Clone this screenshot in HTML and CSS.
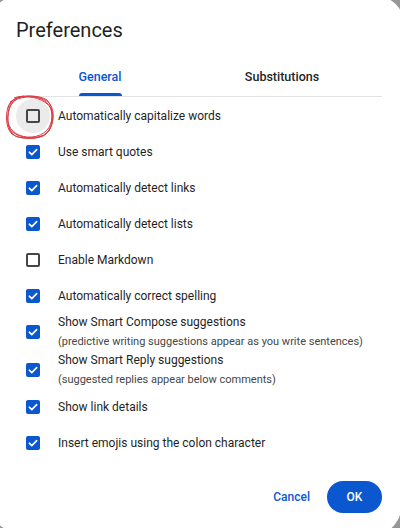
FILE: index.html
```html
<!DOCTYPE html>
<html lang="en">
<head>
<meta charset="utf-8">
<title>Preferences</title>
<link rel="stylesheet" href="styles.css">
</head>
<body>
<div class="dialog">
  <h1 class="title">Preferences</h1>
  <div class="tabs">
    <div class="tab active"><span class="tab-label">General</span></div>
    <div class="tab"><span class="tab-label">Substitutions</span></div>
  </div>
  <ul class="list">
    <li class="row">
      <span class="cb-wrap hover"><span class="cb"></span></span>
      <span class="label">Automatically capitalize words</span>
      <svg class="scribble" width="60" height="48" viewBox="0 0 60 48" fill="none" stroke="#dc3c44" stroke-width="1">
        <path d="M14 4 C26 0 44 2 50 10 C56 19 53 34 46 40 C38 46 20 46 12 40 C5 34 5 16 10 9 C13 5 18 3 24 2"/>
        <path d="M10 8 C18 1 38 0 47 6 C54 12 53 30 49 37 C44 44 28 45 18 43 C10 41 7 31 8 21 C8 14 11 9 17 5"/>
        <path d="M18 3 C30 1 45 5 51 14 C55 23 52 36 43 42 C34 46 19 44 11 37 C6 30 7 15 13 8"/>
        <path d="M8 14 C10 6 22 2 34 3 C44 4 52 11 52 22 C52 34 44 42 32 43 C20 44 10 38 8 28"/>
      </svg>
    </li>
    <li class="row">
      <span class="cb-wrap"><span class="cb checked"><svg viewBox="0 0 14 14" width="14" height="14"><path d="M3.3 7.2 L5.8 9.6 L10.7 4.6" fill="none" stroke="#fff" stroke-width="1.6" stroke-linecap="round" stroke-linejoin="round"/></svg></span></span>
      <span class="label">Use smart quotes</span>
    </li>
    <li class="row">
      <span class="cb-wrap"><span class="cb checked"><svg viewBox="0 0 14 14" width="14" height="14"><path d="M3.3 7.2 L5.8 9.6 L10.7 4.6" fill="none" stroke="#fff" stroke-width="1.6" stroke-linecap="round" stroke-linejoin="round"/></svg></span></span>
      <span class="label">Automatically detect links</span>
    </li>
    <li class="row">
      <span class="cb-wrap"><span class="cb checked"><svg viewBox="0 0 14 14" width="14" height="14"><path d="M3.3 7.2 L5.8 9.6 L10.7 4.6" fill="none" stroke="#fff" stroke-width="1.6" stroke-linecap="round" stroke-linejoin="round"/></svg></span></span>
      <span class="label">Automatically detect lists</span>
    </li>
    <li class="row">
      <span class="cb-wrap"><span class="cb"></span></span>
      <span class="label">Enable Markdown</span>
    </li>
    <li class="row">
      <span class="cb-wrap"><span class="cb checked"><svg viewBox="0 0 14 14" width="14" height="14"><path d="M3.3 7.2 L5.8 9.6 L10.7 4.6" fill="none" stroke="#fff" stroke-width="1.6" stroke-linecap="round" stroke-linejoin="round"/></svg></span></span>
      <span class="label">Automatically correct spelling</span>
    </li>
    <li class="row two">
      <span class="cb-wrap"><span class="cb checked"><svg viewBox="0 0 14 14" width="14" height="14"><path d="M3.3 7.2 L5.8 9.6 L10.7 4.6" fill="none" stroke="#fff" stroke-width="1.6" stroke-linecap="round" stroke-linejoin="round"/></svg></span></span>
      <span class="text">
        <span class="label">Show Smart Compose suggestions</span>
        <span class="sub">(predictive writing suggestions appear as you write sentences)</span>
      </span>
    </li>
    <li class="row two">
      <span class="cb-wrap"><span class="cb checked"><svg viewBox="0 0 14 14" width="14" height="14"><path d="M3.3 7.2 L5.8 9.6 L10.7 4.6" fill="none" stroke="#fff" stroke-width="1.6" stroke-linecap="round" stroke-linejoin="round"/></svg></span></span>
      <span class="text">
        <span class="label">Show Smart Reply suggestions</span>
        <span class="sub">(suggested replies appear below comments)</span>
      </span>
    </li>
    <li class="row">
      <span class="cb-wrap"><span class="cb checked"><svg viewBox="0 0 14 14" width="14" height="14"><path d="M3.3 7.2 L5.8 9.6 L10.7 4.6" fill="none" stroke="#fff" stroke-width="1.6" stroke-linecap="round" stroke-linejoin="round"/></svg></span></span>
      <span class="label">Show link details</span>
    </li>
    <li class="row">
      <span class="cb-wrap"><span class="cb checked"><svg viewBox="0 0 14 14" width="14" height="14"><path d="M3.3 7.2 L5.8 9.6 L10.7 4.6" fill="none" stroke="#fff" stroke-width="1.6" stroke-linecap="round" stroke-linejoin="round"/></svg></span></span>
      <span class="label">Insert emojis using the colon character</span>
    </li>
  </ul>
  <div class="actions">
    <button class="btn text-btn">Cancel</button>
    <button class="btn ok-btn">OK</button>
  </div>
</div>
</body>
</html>
```

FILE: styles.css
```css
* { box-sizing: border-box; }

html, body {
  margin: 0;
  padding: 0;
  height: 100%;
  overflow: hidden;
}

body {
  background: #979797;
  font-family: Roboto, "Liberation Sans", Arial, sans-serif;
  color: #1f1f1f;
}

.dialog {
  width: 414px;
  height: 536px;
  margin: -4px 0 0 -10px;
  background: #ffffff;
  border-radius: 28px 28px 28px 28px;
  border-bottom-right-radius: 22px 40px;
  padding: 22px 22px 0 26px;
  display: flex;
  flex-direction: column;
}

.title {
  margin: 0;
  font-size: 20px;
  line-height: 24px;
  font-weight: 400;
  color: #1f1f1f;
}

.tabs {
  margin-top: 14px;
  display: grid;
  grid-template-columns: 168px 196px;
  border-bottom: 1px solid #e3e3e3;
  width: 366px;
}

.tab {
  height: 40px;
  display: flex;
  justify-content: center;
  font-size: 12.5px;
  font-weight: 500;
  color: #1f1f1f;
}

.tab-label {
  position: relative;
  display: flex;
  align-items: center;
}

.tab.active .tab-label {
  color: #0b57d0;
}

.tab.active .tab-label::after {
  content: "";
  position: absolute;
  left: 0;
  right: 0;
  bottom: 0;
  height: 3px;
  background: #0b57d0;
  border-radius: 3px 3px 0 0;
}

.list {
  list-style: none;
  margin: 1px 0 0 0;
  padding: 0 0 0 10px;
}

.row {
  position: relative;
  height: 36px;
  display: flex;
  align-items: center;
  gap: 18px;
}

.row.two {
  height: 38px;
  margin-top: -1px;
  margin-bottom: 0.5px;
}

.cb-wrap {
  width: 14px;
  height: 14px;
  position: relative;
  flex: none;
}

.cb-wrap.hover::before {
  content: "";
  position: absolute;
  left: -10px;
  top: -10px;
  width: 34px;
  height: 34px;
  border-radius: 50%;
  background: #ebebeb;
}

.cb {
  position: relative;
  display: block;
  width: 14px;
  height: 14px;
  border: 2px solid #444746;
  border-radius: 2px;
}

.cb.checked {
  border: none;
  background: #0b57d0;
}

.cb svg {
  display: block;
}

.label {
  font-size: 12px;
  line-height: 19px;
  color: #1f1f1f;
}

.text {
  display: flex;
  flex-direction: column;
}

.sub {
  font-size: 11px;
  line-height: 19px;
  color: #444746;
}

.scribble {
  position: absolute;
  left: -26px;
  top: -4px;
  width: 60px;
  height: 48px;
  pointer-events: none;
}

.actions {
  margin-top: 20px;
  display: flex;
  justify-content: flex-end;
  gap: 5px;
}

.btn {
  font-family: Roboto, "Liberation Sans", Arial, sans-serif;
  font-size: 12px;
  font-weight: 500;
  height: 32px;
  border: none;
  border-radius: 16px;
  cursor: pointer;
}

.text-btn {
  background: transparent;
  color: #0b57d0;
  padding: 0 12px;
}

.ok-btn {
  background: #0b57d0;
  color: #ffffff;
  width: 55px;
  padding: 0;
}
```
